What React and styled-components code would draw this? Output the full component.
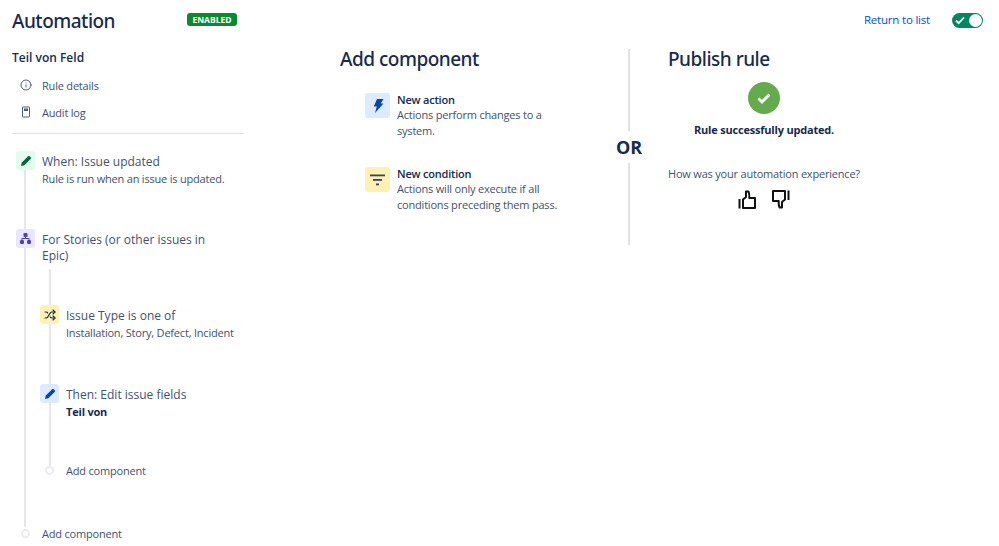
import React from 'react';
import styled, { createGlobalStyle } from 'styled-components';
import { Shuffle, Info } from 'lucide-react';

const GlobalStyle = createGlobalStyle`
    html, body {
        margin: 0;
        padding: 0;
        background: #fff;
        font-family: "Open Sans", "Noto Sans", sans-serif;
        color: #172b4d;
    }
`;

const Page = styled.div`
    width: 999px;
    height: 546px;
    overflow: hidden;
    box-sizing: border-box;
    padding: 9px 16px 0 12px;
`;

const Header = styled.header`
    display: flex;
    align-items: center;
    height: 24px;
`;

const PageTitle = styled.h1`
    margin: 0;
    width: 175px;
    font-family: "Noto Sans", sans-serif;
    font-size: 19px;
    line-height: 24px;
    font-weight: 500;
    letter-spacing: -0.5px;
    color: #172b4d;
`;

const Badge = styled.span`
    width: 50px;
    height: 13px;
    margin-bottom: 3px;
    border-radius: 3px;
    background: #0a8a2e;
    color: #fff;
    font-size: 8.5px;
    line-height: 13px;
    font-weight: 700;
    text-align: center;
`;

const ReturnLink = styled.a`
    margin-left: auto;
    padding-bottom: 2px;
    font-size: 11.5px;
    line-height: 16px;
    letter-spacing: -0.2px;
    color: #0052cc;
`;

const Toggle = styled.div`
    position: relative;
    margin-left: 22px;
    margin-bottom: 1px;
    width: 31px;
    height: 15px;
    border-radius: 8px;
    background: #00875a;
`;

const ToggleKnob = styled.span`
    position: absolute;
    right: 1px;
    top: 1px;
    width: 13px;
    height: 13px;
    border-radius: 50%;
    background: #fff;
`;

const ToggleCheck = styled.svg`
    position: absolute;
    left: 3px;
    top: 3px;
`;

const Columns = styled.main`
    display: flex;
    align-items: flex-start;
`;

const Sidebar = styled.aside`
    width: 232px;
    flex: none;
    margin-right: 96px;
    padding-top: 16px;
`;

const RuleName = styled.div`
    font-size: 12px;
    line-height: 18px;
    font-weight: 600;
`;

const NavItem = styled.div`
    display: flex;
    align-items: center;
    height: 18px;
    margin-top: 9px;
    padding-left: 8px;
    font-size: 11px;
    letter-spacing: -0.2px;
    color: #42526e;
`;

const NavIcon = styled.span`
    display: flex;
    justify-content: center;
    width: 12px;
    margin-right: 10px;
    color: #505f79;
`;

const Rule = styled.hr`
    margin: 12px 0 0;
    border: 0;
    border-top: 1px solid #e4e5e9;
`;

const Timeline = styled.div`
    position: relative;
    margin-top: 17px;
    &::before {
        content: '';
        position: absolute;
        left: 12px;
        top: 19px;
        bottom: 14px;
        width: 2px;
        background: #e6e6ee;
    }
`;

const Step = styled.div`
    position: relative;
    display: flex;
    margin-left: ${(p) => p.$indent || 4}px;
    margin-top: ${(p) => p.$top || 0}px;
`;

const StepIcon = styled.span`
    display: flex;
    align-items: center;
    justify-content: center;
    flex: none;
    width: 19px;
    height: 19px;
    margin-right: 7px;
    border-radius: 3px;
    background: ${(p) => p.$bg};
    color: ${(p) => p.$fg};
`;

const StepText = styled.div`
    max-width: 175px;
    padding-top: 3px;
`;

const StepTitle = styled.div`
    font-size: 12px;
    line-height: 16px;
    color: #42526e;
`;

const StepDesc = styled.div`
    margin-top: 1px;
    font-size: 11px;
    line-height: 16px;
    letter-spacing: -0.2px;
    white-space: nowrap;
    font-weight: ${(p) => (p.$bold ? 700 : 400)};
    color: ${(p) => (p.$bold ? '#172b4d' : '#42526e')};
`;

const Branch = styled.div`
    position: relative;
    margin-top: 41px;
    &::before {
        content: '';
        position: absolute;
        left: 37px;
        top: -36px;
        bottom: 12px;
        width: 2px;
        background: #e6e6ee;
    }
`;

const AddRow = styled.div`
    position: relative;
    display: flex;
    align-items: center;
    height: 16px;
    margin-top: ${(p) => p.$top}px;
    margin-left: ${(p) => p.$indent}px;
    font-size: 11px;
    letter-spacing: -0.2px;
    color: #42526e;
`;

const Dot = styled.span`
    flex: none;
    box-sizing: border-box;
    width: 9px;
    height: 9px;
    margin-right: 12px;
    margin-top: 1px;
    border: 2px solid #ebecf0;
    border-radius: 50%;
    background: #fff;
`;

const Center = styled.section`
    width: 276px;
    flex: none;
    padding-top: 14px;
`;

const Heading = styled.h2`
    margin: 0;
    font-family: "Noto Sans", sans-serif;
    font-size: 19px;
    line-height: 24px;
    font-weight: 500;
    letter-spacing: -0.5px;
    color: #172b4d;
`;

const ComponentCard = styled.div`
    display: flex;
    margin-left: 25px;
    margin-top: ${(p) => p.$top}px;
`;

const CardIcon = styled.span`
    display: flex;
    align-items: center;
    justify-content: center;
    flex: none;
    width: 25px;
    height: 25px;
    margin-right: 7px;
    border-radius: 3px;
    background: ${(p) => p.$bg};
    color: ${(p) => p.$fg};
`;

const CardBody = styled.div`
    width: 172px;
    margin-top: -1px;
    letter-spacing: -0.2px;
`;

const CardTitle = styled.div`
    font-size: 11px;
    line-height: 15px;
    font-weight: 600;
`;

const CardDesc = styled.div`
    font-size: 11px;
    line-height: 16px;
    color: #42526e;
`;

const OrColumn = styled.div`
    display: flex;
    flex-direction: column;
    align-items: center;
    width: 26px;
    flex: none;
    padding-top: 16px;
    margin-right: 26px;
`;

const OrLine = styled.div`
    width: 2px;
    height: 82px;
    background: #dfe1e6;
`;

const OrLabel = styled.div`
    height: 32px;
    font-size: 18px;
    line-height: 32px;
    font-weight: 700;
`;

const Publish = styled.section`
    width: 192px;
    flex: none;
    padding-top: 14px;
`;

const SuccessBlock = styled.div`
    display: flex;
    flex-direction: column;
    align-items: center;
    margin-top: 11px;
`;

const SuccessCircle = styled.span`
    display: flex;
    align-items: center;
    justify-content: center;
    width: 32px;
    height: 32px;
    border-radius: 50%;
    background: #64ab4e;
`;

const SuccessText = styled.div`
    margin-top: 8px;
    font-size: 11px;
    line-height: 16px;
    font-weight: 700;
    letter-spacing: -0.2px;
    white-space: nowrap;
`;

const Question = styled.div`
    margin-top: 28px;
    font-size: 11px;
    line-height: 16px;
    letter-spacing: -0.2px;
    color: #42526e;
    white-space: nowrap;
`;

const Thumbs = styled.div`
    display: flex;
    justify-content: center;
    gap: 16px;
    margin-top: 8px;
    color: #111;
`;

const ThumbIcon = styled.svg`
    transform: ${(p) => (p.$down ? 'rotate(180deg)' : 'none')};
`;

const Pencil = () => (
    <svg width="12" height="12" viewBox="0 0 12 12" fill="currentColor">
        <path d="M8.2 1.2a1 1 0 0 1 1.4 0l1.2 1.2a1 1 0 0 1 0 1.4L4.4 10.2 1 11l.8-3.4z" />
    </svg>
);

const Hierarchy = () => (
    <svg width="13" height="13" viewBox="0 0 13 13" fill="currentColor">
        <rect x="4.5" y="1" width="4" height="4" rx=".8" />
        <rect x="1" y="8" width="4" height="4" rx="1.2" />
        <rect x="8" y="8" width="4" height="4" rx="1.2" />
        <path d="M6 4.500h1V6h3.500v2.500h-1V7h-6v1.500h-1V6H6z" />
    </svg>
);

const Bolt = () => (
    <svg width="14" height="16" viewBox="0 0 14 16" fill="currentColor">
        <path d="M6 1h6.500L9.800 5.600H12.500L4 15l1.800-6.600H2.800z" />
    </svg>
);

const FilterLines = () => (
    <svg width="15" height="12" viewBox="0 0 15 12" fill="currentColor">
        <rect x="0" y="0.500" width="15" height="1.800" />
        <rect x="3" y="5" width="9" height="1.800" />
        <rect x="6" y="9.500" width="3" height="1.800" />
    </svg>
);

const AuditIcon = () => (
    <svg width="10" height="12" viewBox="0 0 10 12" fill="none" stroke="currentColor">
        <rect x="1.500" y="1" width="7" height="10" rx=".5" />
        <rect x="3" y="2.500" width="4" height="2.500" fill="currentColor" stroke="none" />
    </svg>
);

const Thumb = ({ down }) => (
    <ThumbIcon $down={down} width="18" height="19" viewBox="0 0 18 19" fill="none" stroke="currentColor" strokeWidth="2">
        <path d="M1.500 9v9.500" />
        <path d="M5 9.500l3-2.500V1.500h2.500c.8 2 1 4 .8 6.500H17v10H5z" strokeLinejoin="round" />
    </ThumbIcon>
);

const App = () => (
    <Page>
        <GlobalStyle />
        <Header>
            <PageTitle>Automation</PageTitle>
            <Badge>ENABLED</Badge>
            <ReturnLink>Return to list</ReturnLink>
            <Toggle>
                <ToggleCheck width="10" height="9" viewBox="0 0 10 9" fill="none" stroke="#fff" strokeWidth="1.800">
                    <path d="M1 4.500l2.700 2.700L9 1.500" />
                </ToggleCheck>
                <ToggleKnob />
            </Toggle>
        </Header>
        <Columns>
            <Sidebar>
                <RuleName>Teil von Feld</RuleName>
                <NavItem>
                    <NavIcon><Info size={12} /></NavIcon>
                    Rule details
                </NavItem>
                <NavItem>
                    <NavIcon><AuditIcon /></NavIcon>
                    Audit log
                </NavItem>
                <Rule />
                <Timeline>
                    <Step>
                        <StepIcon $bg="#e3fcef" $fg="#006644"><Pencil /></StepIcon>
                        <StepText>
                            <StepTitle>When: Issue updated</StepTitle>
                            <StepDesc>Rule is run when an issue is updated.</StepDesc>
                        </StepText>
                    </Step>
                    <Step $top={42}>
                        <StepIcon $bg="#eae6ff" $fg="#5243aa"><Hierarchy /></StepIcon>
                        <StepText>
                            <StepTitle>For Stories (or other issues in Epic)</StepTitle>
                        </StepText>
                    </Step>
                    <Branch>
                        <Step $indent={28}>
                            <StepIcon $bg="#fff0b3" $fg="#172b4d"><Shuffle size={12} strokeWidth={2.2} /></StepIcon>
                            <StepText>
                                <StepTitle>Issue Type is one of</StepTitle>
                                <StepDesc>Installation, Story, Defect, Incident</StepDesc>
                            </StepText>
                        </Step>
                        <Step $indent={28} $top={43}>
                            <StepIcon $bg="#deebff" $fg="#0747a6"><Pencil /></StepIcon>
                            <StepText>
                                <StepTitle>Then: Edit issue fields</StepTitle>
                                <StepDesc $bold>Teil von</StepDesc>
                            </StepText>
                        </Step>
                        <AddRow $top={42} $indent={33}>
                            <Dot />
                            Add component
                        </AddRow>
                    </Branch>
                    <AddRow $top={47} $indent={9}>
                        <Dot />
                        Add component
                    </AddRow>
                </Timeline>
            </Sidebar>
            <Center>
                <Heading>Add component</Heading>
                <ComponentCard $top={22}>
                    <CardIcon $bg="#deebff" $fg="#0747a6"><Bolt /></CardIcon>
                    <CardBody>
                        <CardTitle>New action</CardTitle>
                        <CardDesc>Actions perform changes to a system.</CardDesc>
                    </CardBody>
                </ComponentCard>
                <ComponentCard $top={28}>
                    <CardIcon $bg="#fff0b3" $fg="#344563"><FilterLines /></CardIcon>
                    <CardBody>
                        <CardTitle>New condition</CardTitle>
                        <CardDesc>Actions will only execute if all conditions preceding them pass.</CardDesc>
                    </CardBody>
                </ComponentCard>
            </Center>
            <OrColumn>
                <OrLine />
                <OrLabel>OR</OrLabel>
                <OrLine />
            </OrColumn>
            <Publish>
                <Heading>Publish rule</Heading>
                <SuccessBlock>
                    <SuccessCircle>
                        <svg width="14" height="11" viewBox="0 0 14 11" fill="none" stroke="#fff" strokeWidth="2.800">
                            <path d="M1.500 5.500l3.500 3.500 7.500-7.500" />
                        </svg>
                    </SuccessCircle>
                    <SuccessText>Rule successfully updated.</SuccessText>
                </SuccessBlock>
                <Question>How was your automation experience?</Question>
                <Thumbs>
                    <Thumb />
                    <Thumb down />
                </Thumbs>
            </Publish>
        </Columns>
    </Page>
);

export default App;
